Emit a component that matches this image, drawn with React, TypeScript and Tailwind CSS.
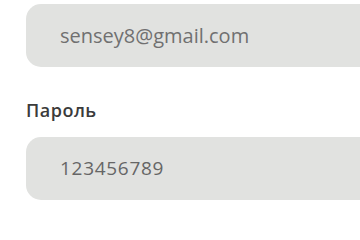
import React from 'react'

const App = () => {
    return (
        <div className="w-[360px] h-[208px] overflow-hidden bg-white" style={{ fontFamily: '"Open Sans", "Noto Sans", sans-serif' }}>
            <div className="w-[420px] pl-[26px] pt-[4px]">
                <div className="h-[63px] rounded-[15px] bg-[#e1e2e0] flex items-center pl-[34px]">
                    <span className="text-[20px] text-[#707070] leading-none">sensey8@gmail.com</span>
                </div>
                <label className="block mt-[31px] text-[18px] leading-[24px] font-semibold tracking-[0.5px] text-[#3b3b3b]">Пароль</label>
                <div className="mt-[15px] h-[63px] rounded-[15px] bg-[#e1e2e0] flex items-center pl-[34px]">
                    <span className="text-[19px] text-[#666666] font-medium tracking-[0.7px] leading-none">123456789</span>
                </div>
            </div>
        </div>
    )
}

export default App
